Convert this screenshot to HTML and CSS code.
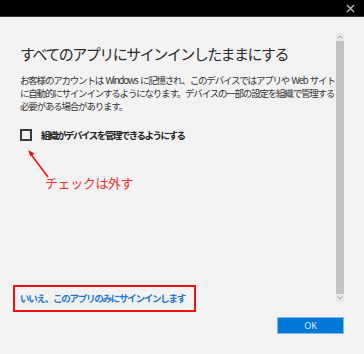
FILE: index.html
```html
<!DOCTYPE html>
<html lang="ja">
<head>
  <meta charset="UTF-8">
  <title>サインイン</title>
  <link rel="stylesheet" href="styles.css">
</head>
<body>
  <div class="window">
    <div class="titlebar">
      <svg class="close" width="9" height="9" viewBox="0 0 9 9">
        <path d="M1 1L8 8M8 1L1 8" stroke="#c8c8c8" stroke-width="1.2"/>
      </svg>
    </div>
    <div class="dialog">
      <div class="main">
        <div class="content">
          <h1 class="title">すべてのアプリにサインインしたままにする</h1>
          <p class="desc">
            <span>お客様のアカウントは Windows に記憶され、このデバイスではアプリや Web サイト</span>
            <span>に自動的にサインインするようになります。デバイスの一部の設定を組織で管理する</span>
            <span>必要がある場合があります。</span>
          </p>
          <label class="check">
            <span class="box"></span>
            <span class="check-text">組織がデバイスを管理できるようにする</span>
          </label>
          <a class="link" href="#">いいえ、このアプリのみにサインインします</a>
        </div>
        <div class="scrollbar">
          <div class="arrow up">
            <svg width="6" height="4" viewBox="0 0 6 4"><path d="M0.5 3.5L3 1L5.5 3.5" stroke="#a0a0a0" fill="none"/></svg>
          </div>
          <div class="thumb"></div>
          <div class="arrow down">
            <svg width="6" height="4" viewBox="0 0 6 4"><path d="M0.5 0.5L3 3L5.5 0.5" stroke="#a0a0a0" fill="none"/></svg>
          </div>
        </div>
      </div>
      <div class="footer">
        <button class="ok">OK</button>
      </div>

      <svg class="pointer" width="30" height="34" viewBox="0 0 30 34">
        <path d="M23 30L5 6" stroke="#ee1111" stroke-width="1.6"/>
        <path d="M3 3L9.5 6.5L5.5 9.5Z" fill="#ee1111"/>
      </svg>
      <div class="note">チェックは外す</div>
    </div>
  </div>
</body>
</html>
```

FILE: styles.css
```css
body {
  margin: 0;
  font-family: "Noto Sans CJK JP", "Noto Sans", sans-serif;
  background-color: #f2f2f2;
}

.window {
  width: 364px;
  height: 354px;
  overflow: hidden;
}

.titlebar {
  height: 16px;
  background-color: #000;
  border-bottom: 1px solid #3a3a3a;
  display: flex;
  justify-content: flex-end;
  align-items: center;
  padding-right: 9px;
}

.dialog {
  position: relative;
  height: 337px;
  display: flex;
  flex-direction: column;
}

.main {
  display: flex;
  padding-top: 16px;
  height: 279px;
}

.content {
  flex: 1;
  overflow: hidden;
  padding-left: 20px;
  display: flex;
  flex-direction: column;
}

.title {
  margin: 11px 0 0;
  font-size: 15px;
  line-height: 20px;
  font-weight: 400;
  letter-spacing: -1.5px;
  color: #2b2b2b;
  white-space: nowrap;
}

.desc {
  margin: 10px 0 0;
  font-size: 9.5px;
  line-height: 12.8px;
  letter-spacing: -1.2px;
  word-spacing: 1.5px;
  color: #333;
  white-space: nowrap;
}

.desc span {
  display: block;
}

.check {
  display: flex;
  align-items: center;
  margin-top: 16px;
}

.box {
  width: 8px;
  height: 8px;
  border: 2px solid #3a3a3a;
  margin-right: 9px;
}

.check-text {
  font-size: 9.5px;
  font-weight: 700;
  letter-spacing: -1.5px;
  color: #222;
}

.link {
  margin-top: auto;
  margin-left: -7px;
  align-self: flex-start;
  height: 23px;
  padding: 0 9px 0 5px;
  border: 2px solid #ee1111;
  font-size: 9.5px;
  line-height: 23px;
  font-weight: 700;
  letter-spacing: -1.25px;
  color: #1a78d0;
  text-decoration: none;
  white-space: nowrap;
}

.scrollbar {
  width: 8px;
  height: 269px;
  margin-right: 20px;
  display: flex;
  flex-direction: column;
}

.arrow {
  height: 8px;
  background-color: #e8e8e8;
  display: flex;
  align-items: center;
  justify-content: center;
}

.thumb {
  flex: 1;
  background-color: #c2c2c2;
}

.footer {
  display: flex;
  justify-content: flex-end;
  padding: 5px 20px 0 0;
}

.ok {
  width: 67px;
  height: 17px;
  padding: 0;
  background-color: #0078d7;
  border: 1px solid #7fbaf0;
  color: #d8ecfc;
  font-family: "Noto Sans", sans-serif;
  font-size: 9px;
}

.pointer {
  position: absolute;
  left: 25px;
  top: 130px;
}

.note {
  position: absolute;
  left: 45px;
  top: 156px;
  font-size: 13px;
  letter-spacing: -0.4px;
  color: #f03030;
}
```
